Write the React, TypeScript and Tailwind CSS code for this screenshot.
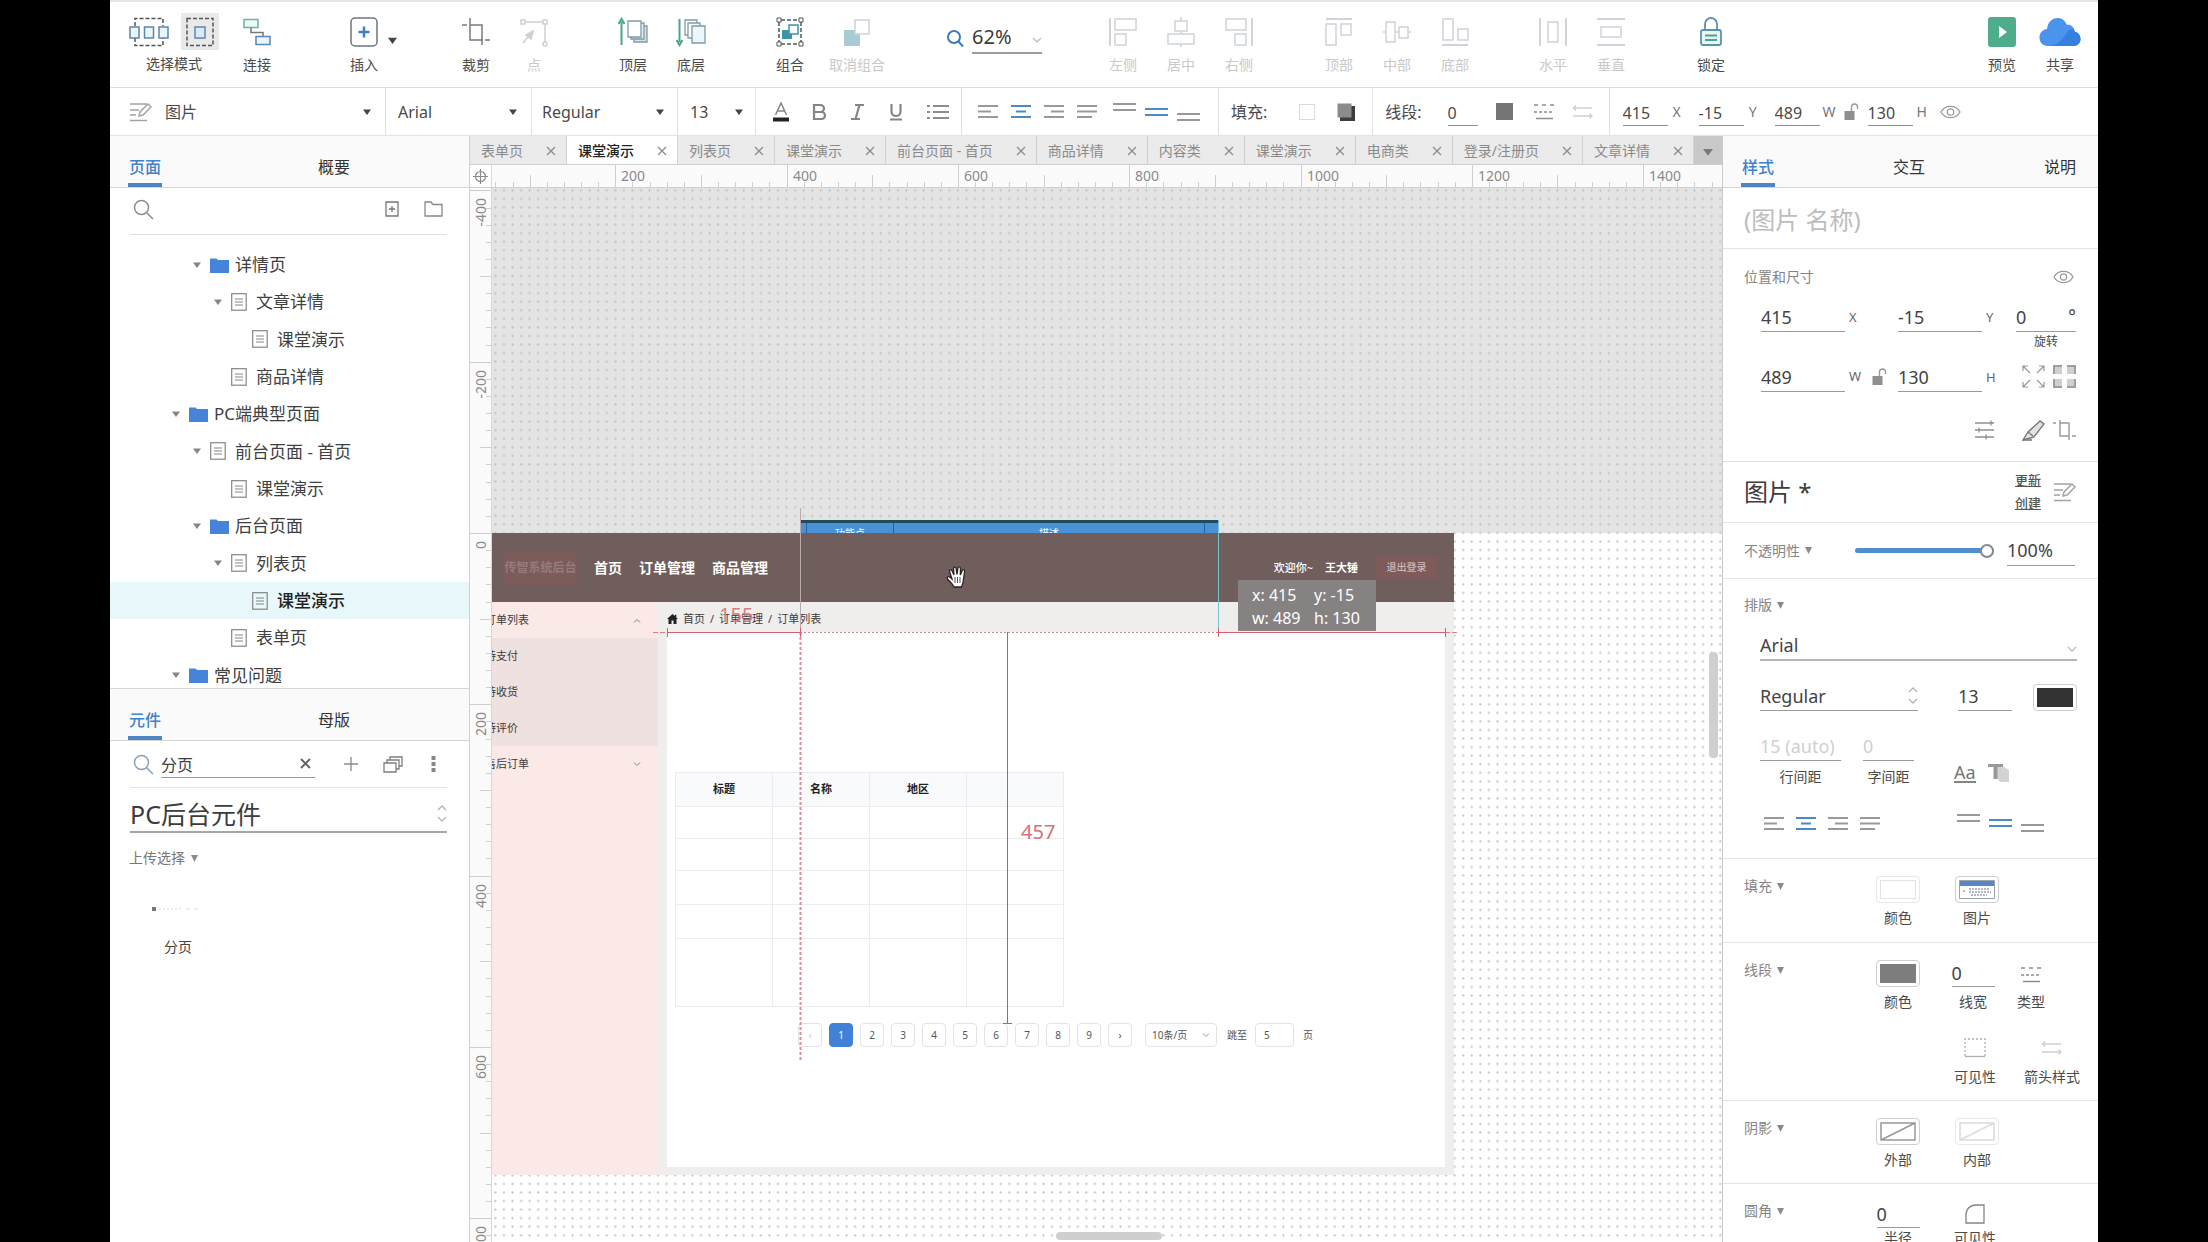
import React from "react";
import type { ReactNode } from "react";

/* ---------- geometry of the design canvas ---------- */
const SCALE = 0.8565; // screen pixels per canvas unit at 62 % zoom
const ORIGIN_X = -48; // canvas zero, measured from the viewport's corner
const ORIGIN_Y = 345;

/* ---------- icon helpers ---------- */
function Icon({ w, h, children, stroke = "#6b7a86", sw = 1.5 }: { w: number; h: number; children: ReactNode; stroke?: string; sw?: number }) {
  return (
    <svg width={w} height={h} viewBox={`0 0 ${w} ${h}`} fill="none" stroke={stroke} strokeWidth={sw} aria-hidden="true" className="block shrink-0">
      {children}
    </svg>
  );
}

const Caret = ({ size = 8, color = "#444" }: { size?: number; color?: string }) => (
  <svg width={size} height={size - 2} viewBox="0 0 8 6" aria-hidden="true" className="block shrink-0">
    <path d="M0 0.5h8L4 6z" fill={color} />
  </svg>
);

const SmallDown = () => (
  <svg width="7" height="7" viewBox="0 0 7 7" aria-hidden="true" className="block shrink-0">
    <path d="M0 0h7L3.5 7z" fill="#8a8a8a" />
  </svg>
);

const ChevronDown = ({ color = "#bdbdbd" }: { color?: string }) => (
  <Icon w={10} h={6} stroke={color} sw={1.3}><path d="M1 1l4 4 4-4" /></Icon>
);

const UpDown = () => (
  <Icon w={10} h={17} stroke="#b5b5b5" sw={1.3}><path d="M1 5l4-4 4 4M1 12l4 4 4-4" /></Icon>
);

const SearchIcon = ({ color = "#8c8c8c" }: { color?: string }) => (
  <Icon w={21} h={21} stroke={color} sw={1.5}><circle cx="8.500" cy="8.500" r="7" /><path d="M13.500 13.500L20 20" /></Icon>
);

const StyleIcon = () => (
  <Icon w={22} h={20} stroke="#a3a3a3" sw={1.5}>
    <path d="M0 2h17M0 8h9M0 13h6M0 18.500h17" />
    <path d="M9 14l1-4 8-8 3 3-8 8z" fill="#fff" />
  </Icon>
);

const Eye = () => (
  <Icon w={21} h={14} stroke="#999" sw={1.2}><path d="M1 7C5-.5 16-.5 20 7 16 14.500 5 14.500 1 7z" /><circle cx="10.500" cy="7" r="3.200" /></Icon>
);

const Unlock = () => (
  <Icon w={15} h={18} stroke="#9a9a9a" sw={1.4}><rect x="0.500" y="8" width="10" height="9" fill="#8f8f8f" stroke="none" /><path d="M7.500 8V4a3 3 0 0 1 6 0v2" /></Icon>
);

const DashIcon = () => (
  <Icon w={22} h={17} stroke="#8d8d8d" sw={1.5}><path d="M1 2h20" strokeDasharray="4 4" /><path d="M1 9h20" strokeDasharray="3 2" /><path d="M3 15.500h17" /></Icon>
);

const ArrowsIcon = () => (
  <Icon w={20} h={14} stroke="#cfcfcf" sw={1.4}><path d="M0 3h19M3 0.500L0.500 3 3 5.500M0 11h19M16.500 8.500L19 11l-2.500 2.500" /></Icon>
);

const CropIcon = ({ color = "#999" }: { color?: string }) => (
  <Icon w={24} h={22} stroke={color} sw={1.4}><path d="M0 4h3M7 1v16h9M7 4h9v14M19 17h4M16 17v4" /></Icon>
);

type Align = "left" | "center" | "right" | "justify";
function AlignIcon({ kind }: { kind: Align }) {
  const on = kind === "center";
  const d = {
    left: "M0 2h20M0 7.500h13M0 13h20",
    center: "M0 2h20M5 7.500h10M0 13h20",
    right: "M0 2h20M7 7.500h13M0 13h20",
    justify: "M0 2h20M0 7.500h20M0 13h15",
  }[kind];
  return <Icon w={20} h={15} stroke={on ? "#4a8ac9" : "#999"} sw={2}><path d={d} /></Icon>;
}

function VAlignIcon({ kind }: { kind: "top" | "middle" | "bottom" }) {
  const y = { top: 2, middle: 7, bottom: 12 }[kind];
  return (
    <Icon w={23} h={20} stroke={kind === "middle" ? "#4a8ac9" : "#999"} sw={2}>
      <path d={`M0 ${y}h23M0 ${y + 6}h23`} />
    </Icon>
  );
}

const Folder = () => (
  <svg width="19" height="16" viewBox="0 0 19 16" aria-hidden="true" className="block"><path d="M0 1.500h6.500L8 3h11v13H0z" fill="#4684da" /></svg>
);
const Doc = () => (
  <Icon w={16} h={18} stroke="#858585" sw={1.2}><rect x="0.700" y="0.700" width="14.500" height="16.500" /><path d="M4 6h8M4 9h8M4 12h8" /></Icon>
);

/* ---------- main toolbar ---------- */
function Tool({ label, icon, muted, className = "" }: { label: string; icon: ReactNode; muted?: boolean; className?: string }) {
  return (
    <button type="button" disabled={muted} className={`flex w-[58px] shrink-0 flex-col items-center gap-[7px] whitespace-nowrap text-sm ${muted ? "text-[#c9c9c9]" : "text-[#4a4a4a]"} ${className}`}>
      <span className="flex h-8 items-center">{icon}</span>
      <span className="leading-5">{label}</span>
    </button>
  );
}

const MUTE = "#d0d4d8";
const BLUE = "#5b86ad";

const alignTools: { label: string; icon: ReactNode; gap?: string }[] = [
  { label: "左侧", gap: "ml-[52px]", icon: <Icon w={28} h={30} stroke={MUTE}><path d="M1 1v28" strokeWidth="2" /><path d="M6 2h21v11H6zM6 17h11v11H6z" /></Icon> },
  { label: "居中", icon: <Icon w={28} h={30} stroke={MUTE}><path d="M14 0v4M14 14v3M14 27v3" /><path d="M8 4h12v10H8zM1 17h26v10H1z" /></Icon> },
  { label: "右侧", icon: <Icon w={28} h={30} stroke={MUTE}><path d="M27 1v28" strokeWidth="2" /><path d="M1 2h20v11H1zM10 17h11v11H10z" /></Icon> },
  { label: "顶部", gap: "ml-[42px]", icon: <Icon w={28} h={30} stroke={MUTE}><path d="M1 2h26" strokeWidth="2" /><path d="M1 7h10v21H1zM16 7h10v11H16z" /></Icon> },
  { label: "中部", icon: <Icon w={28} h={30} stroke={MUTE}><path d="M0 15h3M12 15h4M25 15h3" /><path d="M3 5h9v20H3zM16 10h9v11h-9z" /></Icon> },
  { label: "底部", icon: <Icon w={28} h={30} stroke={MUTE}><path d="M1 28h26" strokeWidth="2" /><path d="M2 2h10v21H2zM17 12h10v11H17z" /></Icon> },
  { label: "水平", gap: "ml-10", icon: <Icon w={30} h={30} stroke={MUTE}><path d="M2 1v28M28 1v28" strokeWidth="2" /><path d="M10 5h10v20H10z" /></Icon> },
  { label: "垂直", icon: <Icon w={28} h={30} stroke={MUTE}><path d="M0 2h28M0 28h28" strokeWidth="2" /><path d="M4 10h20v10H4z" /></Icon> },
];

function MainToolbar() {
  return (
    <header className="flex h-[88px] shrink-0 items-start border-t-2 border-b border-t-[#e6e6e6] border-b-[#dedede] pt-2 pl-[18px] pr-[9px]">
      <div className="flex w-[92px] shrink-0 flex-col items-center gap-1 text-sm text-[#4a4a4a]" role="group" aria-label="选择模式">
        <div className="flex gap-3 pt-[3px]">
          <button type="button" aria-label="相交选中" className="flex h-[37px] items-center">
            <Icon w={40} h={30} stroke={BLUE}>
              <path d="M6 9V1.500h28V9M6 21v7.500h28V21" stroke="#555" strokeDasharray="4 2" />
              <path d="M1 10h9v11H1zM15.500 10h9v11h-9zM30 10h9v11h-9z" fill="#eaf6fb" />
            </Icon>
          </button>
          <button type="button" aria-label="包含选中" className="flex h-[37px] w-[38px] items-center justify-center bg-[#e9e9ea]">
            <Icon w={28} h={30} stroke={BLUE}>
              <rect x="1" y="1.500" width="26" height="27" stroke="#555" strokeDasharray="4 2" />
              <rect x="9" y="10" width="10" height="11" fill="#dce9f7" />
            </Icon>
          </button>
        </div>
        <span className="leading-5">选择模式</span>
      </div>
      <Tool className="ml-2 pt-1.5" label="连接" icon={<Icon w={28} h={28} stroke={BLUE}><path d="M1 1.500h14v8H1z" stroke="#6bb3a0" fill="#eefaf6" /><path d="M8 9.500v5h12v4" stroke="#777" /><path d="M13 18.500h14v8H13z" fill="#eaf6fb" /></Icon>} />
      <div className="ml-[49px] flex pt-1.5">
        <Tool label="插入" icon={<Icon w={28} h={30} stroke="#6c7680"><rect x="1" y="1" width="26" height="28" rx="4" /><path d="M14 9.500v11M8.500 15h11" stroke="#3f7fc4" strokeWidth="2.500" /></Icon>} />
        <button type="button" aria-label="插入选项" className="-ml-[5px] flex h-11 items-center pt-1"><Caret size={9} /></button>
      </div>
      <Tool className="ml-[50px] pt-1.5" label="裁剪" icon={<Icon w={28} h={30} stroke="#7b7b7b"><path d="M0 8h5M8 1v22h13M8 8h12v20M23 23h5" /></Icon>} />
      <Tool className="pt-1.5" muted label="点" icon={<Icon w={28} h={30} stroke="#cfcfcf"><path d="M5 5h18M25 7v18" /><path d="M1 3h4v4H1zM23 3h4v4h-4z" /><circle cx="25" cy="27" r="2" /><path d="M3 26l8-10" /><path d="M13 14l-2 8-5-4z" fill="#cfcfcf" /></Icon>} />
      <Tool className="ml-[41px] pt-1.5" label="顶层" icon={<Icon w={30} h={30} stroke="#7f9ba6" sw={1.3}><path d="M3.500 28V5M0.500 7l3-5 3 5" stroke="#4aa58a" strokeWidth="2" /><path d="M16 9h13v16H16z" fill="#d7e3e4" /><path d="M13 6h13v16H13z" fill="#e4eeee" /><path d="M10 4h13v16H10z" fill="#fff" /></Icon>} />
      <Tool className="pt-1.5" label="底层" icon={<Icon w={30} h={30} stroke="#7f9ba6" sw={1.3}><path d="M3.500 2v23M0.500 23l3 5 3-5" stroke="#4aa58a" strokeWidth="2" /><path d="M9 3h12v15H9z" fill="#fff" /><path d="M12 6h12v15H12z" fill="#fff" /><path d="M16 9h13v17H16z" fill="#eaf6fb" /></Icon>} />
      <Tool className="ml-[41px] pt-1.5" label="组合" icon={<Icon w={28} h={30} stroke="#555"><path d="M5 3h18M5 27h18M3 5v20M25 5v20" strokeDasharray="4 2" /><path d="M1 1h4v4H1zM23 1h4v4h-4zM1 25h4v4H1zM23 25h4v4h-4z" fill="#fff" strokeWidth="1" /><path d="M6 13h10v9H6z" fill="#3c94a8" stroke="none" /><path d="M13 8h9v9h-9z" fill="#fff" stroke="#3c94a8" /></Icon>} />
      <Tool className="ml-[9px] pt-1.5" muted label="取消组合" icon={<Icon w={28} h={30} stroke={MUTE}><path d="M1 13h16v16H1z" fill="#a9cbd6" stroke="none" /><path d="M12 3h14v14H12z" fill="#fff" /></Icon>} />
      <div className="ml-[60px] flex items-center gap-2 pt-3">
        <Icon w={18} h={18} stroke="#3f78bd" sw={2}><circle cx="8" cy="8" r="6" /><path d="M12.500 12.500L17 17.500" /></Icon>
        <div className="grid w-[70px] items-center border-b-2 border-[#9c9c9c]">
          <select aria-label="缩放" defaultValue="62%" className="col-start-1 row-start-1 h-[30px] w-full appearance-none text-xl text-[#3c3c3c]"><option>62%</option></select>
          <span className="pointer-events-none col-start-1 row-start-1 justify-self-end pt-1.5"><ChevronDown /></span>
        </div>
      </div>
      {alignTools.map((t) => <Tool key={t.label} muted label={t.label} icon={t.icon} className={`pt-1.5 ${t.gap ?? ""}`} />)}
      <Tool className="ml-[42px] pt-1.5" label="锁定" icon={<Icon w={24} h={30} stroke="#5b93ab" sw={1.8}><path d="M6 13V7a6 6 0 0 1 12 0v6" /><rect x="2" y="13" width="20" height="15" rx="2" fill="#eaf8f5" /><path d="M6 18.500h12M6 23h12" stroke="#4aa58a" /></Icon>} />
      <Tool className="ml-auto pt-1.5" label="预览" icon={<Icon w={28} h={30} stroke="none"><rect width="28" height="30" rx="3" fill="#4eae8b" /><path d="M11 9l8 6-8 6z" fill="#fff" /></Icon>} />
      <Tool className="pt-1.5" label="共享" icon={<Icon w={42} h={30} stroke="none"><path d="M9 29C3.500 29 .500 25 .500 20.500c0-4.500 3-8 7.500-8.500C9 5 13 1 18.500 1 23 1 26 3.500 27.500 7.500c5 0 8 3 8.500 7.500 3.500.500 5.500 3.500 5.500 7 0 4-3 7-7 7z" fill="#4a93ee" /><path d="M9 29c8 0 14-5 20-15 3-2 5-2 7 1 3.500.500 5.500 3.500 5.500 7 0 4-3 7-7 7z" fill="#357fe0" /></Icon>} />
    </header>
  );
}

/* ---------- format toolbar ---------- */
function BarSelect({ label, value, className, icon }: { label: string; value: string; className: string; icon?: ReactNode }) {
  return (
    <div className={`flex h-full shrink-0 items-center border-r border-[#e2e2e2] ${className}`}>
      {icon}
      <span className="grid flex-1 items-center">
        <select aria-label={label} defaultValue={value} className="col-start-1 row-start-1 w-full appearance-none text-base text-[#4a4a4a]"><option>{value}</option></select>
        <span className="pointer-events-none col-start-1 row-start-1 justify-self-end"><Caret /></span>
      </span>
    </div>
  );
}

function BarField({ name, value, unit, className = "" }: { name: string; value: string; unit: string; className?: string }) {
  return (
    <label className={`flex shrink-0 items-center gap-[3px] text-sm text-[#777] ${className}`}>
      <input aria-label={name} defaultValue={value} className="mt-[3px] h-[26px] w-[45px] border-b border-[#8f8f8f] text-base text-[#4a4a4a]" />
      <span className="w-3 text-center">{unit}</span>
    </label>
  );
}

function FormatBar() {
  return (
    <div className="flex h-[48px] shrink-0 items-center border-b border-[#e2e2e2]" role="toolbar" aria-label="格式">
      <BarSelect label="元件样式" value="图片" className="w-[276px] pl-5 pr-[14px]" icon={<span className="mr-[13px]"><StyleIcon /></span>} />
      <BarSelect label="字体" value="Arial" className="w-[146px] pl-3 pr-[14px]" />
      <BarSelect label="字形" value="Regular" className="w-[146px] pl-[10px] pr-[13px]" />
      <BarSelect label="字号" value="13" className="w-[78px] pl-3 pr-3" />
      <div className="flex h-full shrink-0 items-center gap-[23px] border-r border-[#e2e2e2] pl-[17px] pr-3">
        <button type="button" aria-label="文字颜色"><Icon w={16} h={20} stroke="#858585" sw={1.5}><path d="M2.500 13L8 1l5.500 12M4.500 9h7" /><path d="M0 17.500h16" stroke="#222" strokeWidth="4" /></Icon></button>
        <button type="button" aria-label="粗体"><Icon w={15} h={18} stroke="#858585" sw={2.2}><path d="M2 2h6.500a3.500 3.500 0 0 1 0 7H2zM2 9h7.500a3.500 3.500 0 0 1 0 7H2z" /></Icon></button>
        <button type="button" aria-label="斜体"><Icon w={15} h={18} stroke="#858585" sw={2.2}><path d="M5 2h9M1 16h9M9.500 2l-4 14" /></Icon></button>
        <button type="button" aria-label="下划线"><Icon w={16} h={18} stroke="#858585" sw={2.2}><path d="M3.500 1v7.500a4.500 4.500 0 0 0 9 0V1M2 16.500h12" /></Icon></button>
        <button type="button" aria-label="列表"><Icon w={22} h={16} stroke="#8d8d8d" sw={2.2}><path d="M0 2h3M6 2h16M0 8h3M6 8h16M0 14h3M6 14h16" /></Icon></button>
      </div>
      <div className="flex h-full shrink-0 items-center border-r border-[#e2e2e2] pl-4 pr-[18px]">
        <div className="flex gap-[13px]">
          {(["left", "center", "right", "justify"] as Align[]).map((k) => <button type="button" key={k} aria-label={`align ${k}`}><AlignIcon kind={k} /></button>)}
        </div>
        <div className="ml-4 flex gap-[9px]">
          {(["top", "middle", "bottom"] as const).map((k) => <button type="button" key={k} aria-label={`align ${k}`}><VAlignIcon kind={k} /></button>)}
        </div>
      </div>
      <div className="flex h-full shrink-0 items-center border-r border-[#e2e2e2] pl-3 pr-[17px] text-base text-[#4a4a4a]">
        填充:
        <button type="button" aria-label="填充颜色" className="ml-8 size-4 border border-[#dadada]" />
        <button type="button" aria-label="阴影" className="ml-[22px]"><Icon w={18} h={18} stroke="none"><path d="M3 3h15v15H3z" fill="#3d3d3d" /><path d="M0.500 0.500h14v14h-14z" fill="#8b8b8b" /></Icon></button>
      </div>
      <div className="flex h-full shrink-0 items-center border-r border-[#e2e2e2] pl-3 pr-4 text-base text-[#4a4a4a]">
        线段:
        <input aria-label="线宽" defaultValue="0" className="ml-[26px] mt-[3px] h-[26px] w-[30px] border-b border-[#8f8f8f]" />
        <button type="button" aria-label="线段颜色" className="ml-[18px] size-[17px] bg-[#757575]" />
        <button type="button" aria-label="线段类型" className="ml-5"><DashIcon /></button>
        <button type="button" aria-label="箭头样式" className="ml-[18px]"><ArrowsIcon /></button>
      </div>
      <BarField name="X" value="415" unit="X" className="ml-[13px]" />
      <BarField name="Y" value="-15" unit="Y" className="ml-4" />
      <BarField name="宽" value="489" unit="W" className="ml-4" />
      <button type="button" aria-label="锁定比例" className="mx-[9px]"><Unlock /></button>
      <BarField name="高" value="130" unit="H" />
      <button type="button" aria-label="显示" className="ml-3"><Eye /></button>
    </div>
  );
}

/* ---------- left column ---------- */
function PanelTabs({ tabs, className = "" }: { tabs: string[]; className?: string }) {
  return (
    <div role="tablist" className={`flex h-[52px] shrink-0 items-end border-b border-[#d5d5d5] bg-[#fafafa] text-base ${className}`}>
      {tabs.map((t, i) => (
        <button key={t} type="button" role="tab" aria-selected={i === 0} className={`h-10 border-b-4 px-px pt-1 ${i === 0 ? "border-[#4f83c3] font-medium text-[#3f82cc]" : "border-transparent text-[#333]"}`}>{t}</button>
      ))}
    </div>
  );
}

type Node = { name: string; level: number; folder?: boolean; leaf?: boolean; active?: boolean };
const tree: Node[] = [
  { name: "详情页", level: 3, folder: true },
  { name: "文章详情", level: 4 },
  { name: "课堂演示", level: 5, leaf: true },
  { name: "商品详情", level: 4, leaf: true },
  { name: "PC端典型页面", level: 2, folder: true },
  { name: "前台页面 - 首页", level: 3 },
  { name: "课堂演示", level: 4, leaf: true },
  { name: "后台页面", level: 3, folder: true },
  { name: "列表页", level: 4 },
  { name: "课堂演示", level: 5, leaf: true, active: true },
  { name: "表单页", level: 4, leaf: true },
  { name: "常见问题", level: 2, folder: true },
];
const indent: Record<number, string> = { 2: "pl-[62px]", 3: "pl-[83px]", 4: "pl-[104px]", 5: "pl-[125px]" };

function LeftColumn() {
  return (
    <aside className="flex w-[360px] shrink-0 flex-col border-r border-[#d0d0d0]">
      <section className="flex h-1/2 shrink-0 flex-col overflow-hidden border-b border-[#d5d5d5]">
        <PanelTabs tabs={["页面", "概要"]} className="gap-[155px] pl-[18px]" />
        <div className="ml-5 mr-[22px] flex h-[47px] shrink-0 items-center border-b border-[#dedede] pl-[3px] pb-1">
          <button type="button" aria-label="搜索页面"><SearchIcon /></button>
          <button type="button" aria-label="新增页面" className="ml-auto"><Icon w={14} h={16} stroke="#777" sw={1.3}><path d="M1 1h12v14H1zM7 5v6M4 8h6" /></Icon></button>
          <button type="button" aria-label="新增文件夹" className="ml-[25px] mr-1"><Icon w={19} h={16} stroke="#888" sw={1.3}><path d="M1 15V1h6l2 2.500h9V15z" /></Icon></button>
        </div>
        <ul className="mt-[11px] grid h-[448px] shrink-0 auto-rows-fr text-[17px] text-[#404040]">
          {tree.map((n, i) => (
            <li key={i} className={n.active ? "bg-[#e8f7fa]" : ""}>
              <button type="button" className={`flex h-full w-full items-center ${indent[n.level]} ${n.active ? "font-medium text-[#222]" : ""}`}>
                <span className="w-[17px]">{!n.leaf && <Caret color="#858585" />}</span>
                <span className="w-[25px]">{n.folder ? <Folder /> : <Doc />}</span>
                {n.name}
              </button>
            </li>
          ))}
        </ul>
      </section>
      <section className="flex flex-col">
        <PanelTabs tabs={["元件", "母版"]} className="gap-[155px] pl-[18px]" />
        <div className="ml-5 mr-[22px] flex h-[47px] items-center border-b border-[#e4e4e4] pl-[3px]">
          <SearchIcon color="#8aa0bb" />
          <span className="ml-[7px] flex w-[154px] items-center border-b border-[#9a9a9a]">
            <input aria-label="搜索元件" defaultValue="分页" className="h-[27px] w-full min-w-0 text-base text-[#404040]" />
            <button type="button" aria-label="清除" className="mr-1 shrink-0"><Icon w={11} h={11} stroke="#666" sw={2}><path d="M1 1l9 9M10 1l-9 9" /></Icon></button>
          </span>
          <button type="button" aria-label="添加" className="ml-[29px]"><Icon w={14} h={14} stroke="#8a8a8a" sw={1.3}><path d="M7 0v14M0 7h14" /></Icon></button>
          <button type="button" aria-label="元件库" className="ml-[25px]"><Icon w={20} h={17} stroke="#7e7e7e" sw={1.3}><path d="M1 7h12v9H1zM4 7V4h12v9h-3M7 4V1h12v9h-3" /></Icon></button>
          <button type="button" aria-label="更多" className="ml-7"><Icon w={5} h={16} stroke="none"><path d="M0.500 0h4v4h-4zM0.500 6h4v4h-4zM0.500 12h4v4h-4z" fill="#888" /></Icon></button>
        </div>
        <div className="ml-5 mr-[22px] mt-1 grid items-center border-b-2 border-[#a6a6a6]">
          <select aria-label="元件库" defaultValue="PC后台元件" className="col-start-1 row-start-1 h-[39px] w-full appearance-none pt-1 text-[25px] text-[#3c3c3c]"><option>PC后台元件</option></select>
          <span className="pointer-events-none col-start-1 row-start-1 justify-self-end pt-1"><UpDown /></span>
        </div>
        <button type="button" className="ml-[19px] mt-[14px] flex h-[22px] items-center gap-1.5 text-sm text-[#777]">上传选择 <SmallDown /></button>
        <button type="button" className="ml-[37px] mt-9 flex w-[62px] flex-col items-center gap-6 text-sm text-[#444]">
          <Icon w={52} h={8} stroke="#d8d8d8" sw={1}><path d="M0 2h4v4H0z" fill="#777" stroke="none" /><path d="M7 4h24" strokeDasharray="2 2" /><path d="M34 4h16" strokeDasharray="4 4" /></Icon>
          分页
        </button>
      </section>
    </aside>
  );
}

/* ---------- canvas column ---------- */
const tabs = ["表单页", "课堂演示", "列表页", "课堂演示", "前台页面 - 首页", "商品详情", "内容类", "课堂演示", "电商类", "登录/注册页", "文章详情"];

function DocTabs() {
  return (
    <div className="flex h-[29px] shrink-0 border-b border-[#cfcfcf] bg-[#ebebeb] text-sm text-[#8a8a8a]">
      {tabs.map((t, i) => (
        <div key={i} className={`flex shrink-0 items-center border-r border-[#d2d2d2] pt-0.5 ${i === 1 ? "bg-white font-medium text-[#222]" : ""}`}>
          <button type="button" className="whitespace-nowrap pl-[11px] pr-[23px]">{t}</button>
          <button type="button" aria-label={`关闭 ${t}`} className="mr-[10px]"><Icon w={10} h={10} stroke="#8a8a8a" sw={1.2}><path d="M1 1l8 8M9 1L1 9" /></Icon></button>
        </div>
      ))}
      <button type="button" aria-label="全部标签" className="ml-auto flex w-[31px] items-center justify-center bg-[#c9c9c9] pt-1"><Caret size={10} color="#7a7a7a" /></button>
    </div>
  );
}

const steps = (from: number, to: number) => Array.from({ length: (to - from) / 20 + 1 }, (_, i) => from + i * 20);

function HRuler() {
  return (
    <svg className="h-full min-w-0 flex-1 bg-[#fbfbfb]" aria-hidden="true">
      {steps(60, 1480).map((u) => {
        const x = Math.round(ORIGIN_X + u * SCALE);
        const y = u % 200 === 0 ? 0 : u % 100 === 0 ? 10 : 17;
        return (
          <g key={u}>
            <line x1={x + 0.5} x2={x + 0.5} y1={y} y2={23} stroke="#cfcfcf" />
            {u % 200 === 0 && <text x={x + 6} y={16} fontSize="14" fill="#8a8a8a">{u}</text>}
          </g>
        );
      })}
    </svg>
  );
}

function VRuler() {
  return (
    <svg className="h-full w-[22px] shrink-0 border-r border-[#d8d8d8] bg-[#fbfbfb]" aria-hidden="true">
      {steps(-400, 880).map((u) => {
        const y = Math.round(ORIGIN_Y + u * SCALE);
        const x = u % 200 === 0 ? 0 : u % 100 === 0 ? 10 : 16;
        return (
          <g key={u}>
            <line x1={x} x2={22} y1={y + 0.5} y2={y + 0.5} stroke="#cfcfcf" />
            {u % 200 === 0 && <text transform={`translate(16 ${y + 8}) rotate(-90)`} textAnchor="end" fontSize="14" fill="#8a8a8a">{u}</text>}
          </g>
        );
      })}
    </svg>
  );
}

function Mockup() {
  return (
    <div className="absolute top-[345px] -left-12 flex w-[1010px] flex-col bg-[#efeeec] text-[11px] text-[#3f3a3a]">
      <div className="flex h-[69px] items-center bg-[#6f5e5c] pl-[60px] pr-[17px] text-sm font-bold text-white">
        <span className="flex h-[34px] w-[73px] items-center justify-center whitespace-nowrap bg-[#7c5b5a] text-xs text-[#957d7b]">传智系统后台</span>
        <span className="ml-[17px]">首页</span>
        <span className="ml-[17px]">订单管理</span>
        <span className="ml-[17px]">商品管理</span>
        <span className="ml-auto text-[11px] font-medium">欢迎你~</span>
        <span className="ml-3 text-[11px]">王大锤</span>
        <span className="ml-[18px] flex h-[23px] w-[61px] items-center justify-center bg-[#7c5b5a] text-[10px] font-medium text-[#cdbcba]">退出登录</span>
      </div>
      <div className="flex h-[573px]">
        <div className="w-[214px] bg-[#fae9e7]">
          <div className="flex h-9 items-center justify-between pl-[41px] pr-[17px]">订单列表<Icon w={8} h={5} stroke="#8a8080" sw={1}><path d="M1 4.500l3-3 3 3" /></Icon></div>
          <div className="bg-[#efe1df]">
            {["待支付", "待收货", "待评价"].map((t) => <div key={t} className="flex h-9 items-center pl-[41px]">{t}</div>)}
          </div>
          <div className="flex h-9 items-center justify-between pl-[41px] pr-[17px]">售后订单<Icon w={8} h={5} stroke="#8a8080" sw={1}><path d="M1 0.500l3 3 3-3" /></Icon></div>
        </div>
        <div className="flex flex-1 flex-col pb-2 pl-[9px] pr-[9px]">
          <div className="flex h-[30px] items-center gap-[5px] pt-1">
            <svg width="11" height="10" viewBox="0 0 11 10" aria-hidden="true"><path d="M5.500 0L0 5h1.500v5h3V6.500h2V10h3V5H11L9.300 3.400V.8H7.800V2z" fill="#222" /></svg>
            <span>首页</span><span>/</span><span>订单管理</span><span>/</span><span>订单列表</span>
          </div>
          <div className="flex flex-1 flex-col bg-white">
            <table className="ml-2 mt-[140px] w-[389px] table-fixed border-collapse">
              <thead>
                <tr className="h-[34px] bg-[#f9fafc]">
                  {["标题", "名称", "地区", ""].map((h, i) => <th key={i} className="border border-[#ececf0] text-center font-bold text-[#222]">{h}</th>)}
                </tr>
              </thead>
              <tbody>
                {["h-8", "h-8", "h-[34px]", "h-[34px]", "h-[68px]"].map((h, r) => (
                  <tr key={r} className={h}>{[0, 1, 2, 3].map((c) => <td key={c} className="border border-[#ececf0]" />)}</tr>
                ))}
              </tbody>
            </table>
            <nav aria-label="分页" className="ml-[131px] mt-4 flex items-center text-[10px] text-[#555]">
              <div className="flex gap-[7px]">
                {["‹", "1", "2", "3", "4", "5", "6", "7", "8", "9", "›"].map((p) => (
                  <button key={p} type="button" className={`h-6 w-6 rounded-sm border ${p === "1" ? "border-[#3f82d8] bg-[#3f82d8] text-white" : p === "‹" ? "border-[#e3e3e3] text-[#ccc]" : "border-[#e3e3e3]"}`}>{p}</button>
                ))}
              </div>
              <span className="ml-[13px] grid w-[72px] items-center rounded-sm border border-[#e3e3e3]">
                <select aria-label="每页条数" defaultValue="10条/页" className="col-start-1 row-start-1 h-[22px] appearance-none pl-1.5"><option>10条/页</option></select>
                <span className="pointer-events-none col-start-1 row-start-1 mr-1.5 justify-self-end"><Icon w={8} h={5} stroke="#999" sw={1}><path d="M1 0.500l3 3 3-3" /></Icon></span>
              </span>
              <label className="ml-[10px] flex items-center gap-2">跳至<input defaultValue="5" className="h-6 w-[39px] rounded-sm border border-[#e3e3e3] pl-2" /></label>
              <span className="ml-[9px]">页</span>
            </nav>
          </div>
        </div>
      </div>
    </div>
  );
}

function Viewport() {
  const grid = 10 * SCALE;
  return (
    <div className="relative min-w-0 flex-1 overflow-hidden bg-white">
      <div className="h-[345px] bg-[#e4e4e4]" />
      <svg className="absolute inset-0 h-full w-full" aria-hidden="true">
        <defs>
          <pattern id="dots" x={ORIGIN_X - grid / 2} y={ORIGIN_Y - grid / 2} width={grid} height={grid} patternUnits="userSpaceOnUse">
            <circle cx={grid / 2} cy={grid / 2} r="1.1" fill="#c0c0c0" />
          </pattern>
        </defs>
        <rect width="100%" height="100%" fill="url(#dots)" />
      </svg>

      <div className="absolute top-[332px] left-[308px] flex h-[111px] w-[418px] items-start border-t-[3px] border-[#1f4b5c] bg-[#4a92d8] px-1.5 text-[10px] leading-5 text-white">
        <span className="w-[88px] border-x border-[#2c5f93] text-center">功能点</span>
        <span className="flex-1 text-center">描述</span>
        <span className="w-2 border-l border-[#2c5f93]">&nbsp;</span>
      </div>

      <Mockup />

      <svg className="absolute inset-0 h-full w-full" fill="none" aria-hidden="true">
        <path d="M308.500 320v124" stroke="#b9aaa9" />
        <path d="M726.500 332v112" stroke="#74c4cf" />
        <path d="M308.500 444v428" stroke="#dc8f9b" strokeWidth="2" strokeDasharray="3 2" />
        <path d="M308 444.500h418" stroke="#b98c8e" strokeDasharray="2 2" />
        <path d="M161 444.500h14M953 444.500h14" stroke="#d97c88" strokeDasharray="5 2" />
        <path d="M175 444.500h133M726 444.500h227" stroke="#d0606e" />
        <path d="M175.500 440v9M308.500 440v9M726.500 440v9M953.500 440v9" stroke="#d0606e" />
        <path d="M515.500 444v391M511 835.500h9" stroke="#b85f6a" />
      </svg>
      <span className="absolute top-[413px] left-[227px] text-xl text-[#dc7b87]">155</span>
      <span className="absolute top-[630px] left-[529px] text-xl text-[#d8707d]">457</span>

      <div className="absolute top-[392px] left-[746px] grid w-[138px] grid-cols-[62px_auto] bg-[#868282] pt-1 pb-px pl-[14px] text-base leading-[23px] text-white">
        <span>x: 415</span><span>y: -15</span>
        <span>w: 489</span><span>h: 130</span>
      </div>

      <svg className="absolute top-[377px] left-[453px]" width="24" height="24" viewBox="0 0 24 24" aria-hidden="true">
        <path d="M9 22c-1-3-4-5-6.500-8-1-1.600.8-3 2.200-2L7 14 4.500 6.500c-.4-1.800 1.800-2.300 2.500-.8L9 10 8.500 3.500c0-1.800 2.300-1.900 2.600-.2L12 9.500l1-6.500c.3-1.700 2.500-1.400 2.500.4L15.300 10l2-4.500c.8-1.500 2.700-.8 2.300.8L18.500 14c-.2 3.500-.8 5.500-2 8z" fill="#fff" stroke="#2b2222" strokeWidth="1.300" />
        <path d="M10 12v6M12.500 12v6M15 12v6" stroke="#2b2222" strokeWidth="0.800" />
      </svg>

      <div className="absolute top-[464px] right-1 h-[106px] w-[9px] rounded-sm bg-[#cfcfcf]" />
      <div className="absolute bottom-[2px] left-[564px] h-2 w-[106px] rounded-sm bg-[#cfcfcf]" />
    </div>
  );
}

function CanvasColumn() {
  return (
    <main className="flex min-w-0 flex-1 flex-col">
      <DocTabs />
      <div className="flex h-[23px] shrink-0 border-b border-[#cfcfcf]">
        <div className="flex w-[22px] shrink-0 items-center justify-center border-r border-[#d8d8d8]">
          <Icon w={15} h={15} stroke="#8a8a8a" sw={1.2}><circle cx="7.500" cy="7.500" r="5" /><path d="M7.500 0v15M0 7.500h15" /></Icon>
        </div>
        <HRuler />
      </div>
      <div className="flex min-h-0 flex-1">
        <VRuler />
        <Viewport />
      </div>
    </main>
  );
}

/* ---------- inspector ---------- */
function Field({ name, value, className = "", faint }: { name: string; value: string; className?: string; faint?: boolean }) {
  return <input aria-label={name} defaultValue={value} className={`block h-[30px] border-b border-[#9a9a9a] text-lg ${faint ? "text-[#cfcfcf]" : "text-[#444]"} ${className}`} />;
}

function SectionLabel({ children }: { children: ReactNode }) {
  return <button type="button" className="flex h-5 w-[125px] shrink-0 items-center gap-[5px] text-sm text-[#858585]">{children}<SmallDown /></button>;
}

function Swatch({ label, children, faint }: { label: string; children: ReactNode; faint?: boolean }) {
  return (
    <button type="button" className="flex w-[58px] flex-col items-center gap-[5px] text-sm leading-5 text-[#4a4a4a]">
      <span className={`flex h-[27px] w-11 items-center justify-center rounded-sm border ${faint ? "border-[#e8e8e8]" : "border-[#cfcfcf]"}`}>{children}</span>
      {label}
    </button>
  );
}

function IconItem({ label, icon, className }: { label: string; icon: ReactNode; className: string }) {
  return (
    <button type="button" className={`flex flex-col items-center whitespace-nowrap text-sm leading-5 text-[#4a4a4a] ${className}`}>{icon}{label}</button>
  );
}

const Shadow = ({ color }: { color: string }) => <Icon w={36} h={19} stroke={color} sw={1.5}><path d="M1 1h34v17H1zM1 18L35 1" /></Icon>;

function Inspector() {
  return (
    <aside className="flex w-[376px] shrink-0 flex-col overflow-hidden border-l border-[#c9c9c9]">
      <PanelTabs tabs={["样式", "交互", "说明"]} className="justify-between pl-[18px] pr-[21px]" />
      <div className="flex h-[61px] shrink-0 items-center border-b border-[#e4e4e4] pl-[21px]">
        <input aria-label="名称" placeholder="(图片 名称)" className="mt-1 w-full text-2xl placeholder:text-[#bdbdbd]" />
      </div>

      <section className="shrink-0 border-b border-[#dcdcdc] pt-[18px] pb-[21px] pl-[21px] pr-[21px]">
        <div className="flex h-5 items-center justify-between pr-[3px] text-sm text-[#858585]">位置和尺寸<button type="button" aria-label="显示"><Eye /></button></div>
        <div className="mt-[15px] grid grid-cols-[84px_53px_84px_34px_60px] items-start gap-y-[10px] pl-[17px] text-[13px] text-[#666]">
          <Field name="X" value="415" className="w-full" /><span className="pt-[6px] pl-1">X</span>
          <Field name="Y" value="-15" className="w-full" /><span className="pt-[6px] pl-1">Y</span>
          <label className="flex flex-col items-center">
            <span className="flex w-full justify-between border-b border-[#9a9a9a] text-lg text-[#444]"><input defaultValue="0" className="h-[29px] w-10" />°</span>
            <span className="text-xs leading-5 text-[#4a4a4a]">旋转</span>
          </label>
          <Field name="宽" value="489" className="w-full" /><span className="flex items-center gap-[11px] pt-[5px] pl-1">W<button type="button" aria-label="锁定比例"><Unlock /></button></span>
          <Field name="高" value="130" className="w-full" /><span className="pt-[6px] pl-1">H</span>
          <div className="flex gap-2 pt-[3px] pl-[6px]">
            <button type="button" aria-label="适合内容"><Icon w={23} h={23} stroke="#999" sw={1.2}><path d="M8 8L1 1M1 6V1h5M15 8l7-7M22 6V1h-5M8 15l-7 7M1 17v5h5M15 15l7 7M22 17v5h-5" /></Icon></button>
            <button type="button" aria-label="适合图片"><Icon w={23} h={23} stroke="none"><path d="M0 0h9v9H0zM14 0h9v9h-9zM0 14h9v9H0zM14 14h9v9h-9z" fill="#d0d0d0" /><path d="M1 9V1h8M14 1h8v8M1 14v8h8M14 22h8v-8" stroke="#8f8f8f" strokeWidth="1.500" /></Icon></button>
          </div>
        </div>
        <div className="mt-7 flex h-5 items-center justify-end">
          <button type="button" aria-label="调整" className="mr-[27px]"><Icon w={20} h={20} stroke="#8f8f8f" sw={1.3}><path d="M0 3h19M16 0.500v5M0 10h19M4 7.500v5M0 17h19M11 14.500v5" /></Icon></button>
          <button type="button" aria-label="切片" className="mr-2"><Icon w={23} h={21} stroke="#777" sw={1.4}><path d="M1 20l5-8 12-11 4 3-10 13z" fill="#e2e2e2" /><path d="M6 12l5 4M1 20h9" /></Icon></button>
          <button type="button" aria-label="裁剪"><CropIcon /></button>
        </div>
      </section>

      <section className="flex h-[61px] shrink-0 items-center border-b border-[#e6e6e6] pl-[21px] pr-[22px]">
        <h2 className="text-2xl text-[#3c3c3c]">图片 *</h2>
        <div className="ml-auto mr-[13px] flex flex-col text-[13px] font-medium leading-[23px] text-[#555]">
          <a href="#update" className="underline">更新</a>
          <a href="#create" className="underline">创建</a>
        </div>
        <button type="button" aria-label="样式管理"><StyleIcon /></button>
      </section>

      <section className="flex h-14 shrink-0 items-center border-b border-[#e6e6e6] pl-[21px] pr-[23px]">
        <button type="button" className="flex items-center gap-[5px] text-sm text-[#858585]">不透明性<SmallDown /></button>
        <input type="range" aria-label="不透明性" defaultValue={100} className="ml-auto h-[5px] w-[139px] appearance-none rounded-full bg-[#4f8fd0] [&::-webkit-slider-thumb]:size-[14px] [&::-webkit-slider-thumb]:appearance-none [&::-webkit-slider-thumb]:rounded-full [&::-webkit-slider-thumb]:border-2 [&::-webkit-slider-thumb]:border-[#7f8a96] [&::-webkit-slider-thumb]:bg-white" />
        <Field name="不透明性数值" value="100%" className="ml-[13px] w-[68px]" />
      </section>

      <section className="shrink-0 border-b border-[#e4e4e4] pt-4 pb-[25px] pl-[21px] pr-[21px]">
        <SectionLabel>排版</SectionLabel>
        <div className="pl-4">
          <div className="mt-4 grid items-center border-b-2 border-[#b5b5b5]">
            <select aria-label="字体" defaultValue="Arial" className="col-start-1 row-start-1 h-7 w-full appearance-none text-lg text-[#444]"><option>Arial</option></select>
            <span className="pointer-events-none col-start-1 row-start-1 justify-self-end pt-2"><ChevronDown /></span>
          </div>
          <div className="mt-5 flex items-start">
            <div className="grid w-[158px] items-center border-b border-[#9a9a9a]">
              <select aria-label="字形" defaultValue="Regular" className="col-start-1 row-start-1 h-[29px] w-full appearance-none text-lg text-[#444]"><option>Regular</option></select>
              <span className="pointer-events-none col-start-1 row-start-1 justify-self-end"><UpDown /></span>
            </div>
            <Field name="字号" value="13" className="ml-10 w-[54px]" />
            <button type="button" aria-label="文字颜色" className="ml-auto mt-[3px] flex h-[27px] w-11 items-center justify-center rounded-sm border border-[#cfcfcf]"><span className="h-[19px] w-9 bg-[#333]" /></button>
          </div>
          <div className="mt-5 flex items-start text-sm leading-5 text-[#4a4a4a]">
            <label className="flex w-[81px] flex-col items-center gap-1.5"><Field name="行间距" value="15 (auto)" faint className="w-full" />行间距</label>
            <label className="ml-[22px] flex w-[51px] flex-col items-center gap-1.5"><Field name="字间距" value="0" faint className="w-full" />字间距</label>
            <button type="button" aria-label="大小写" className="ml-10 mt-8 border-b-2 border-[#858585] text-lg leading-[18px] text-[#777]">Aa</button>
            <button type="button" aria-label="文字阴影" className="ml-3 mt-8"><Icon w={22} h={20} stroke="none"><path d="M8 4h8l5 3v12h-9l-4-5z" fill="#d3d3d3" /><path d="M0 1h15v3H9.500v12H5.500V4H0z" fill="#999" /></Icon></button>
          </div>
          <div className="mt-[26px] flex h-5 items-center pl-1">
            <div className="flex gap-3">
              {(["left", "center", "right", "justify"] as Align[]).map((k) => <button type="button" key={k} aria-label={`align ${k}`}><AlignIcon kind={k} /></button>)}
            </div>
            <div className="ml-[77px] flex gap-[9px]">
              {(["top", "middle", "bottom"] as const).map((k) => <button type="button" key={k} aria-label={`align ${k}`}><VAlignIcon kind={k} /></button>)}
            </div>
          </div>
        </div>
      </section>

      <section className="flex shrink-0 items-start border-b border-[#e4e4e4] pt-[17px] pb-[14px] pl-[21px]">
        <SectionLabel>填充</SectionLabel>
        <Swatch faint label="颜色"><span className="h-[19px] w-9 border border-[#e3e3e3] bg-white" /></Swatch>
        <div className="ml-[21px]">
          <Swatch label="图片">
            <Icon w={36} h={19} stroke="#9aa3b0" sw={1}><path d="M0.500 0.500h35v18H0.500z" fill="#fff" /><path d="M1 3.500h34" stroke="#5b86c4" strokeWidth="5" /><path d="M4 11h3M10 9h20M10 12h22M12 15h16" strokeDasharray="2 1" strokeWidth="1.500" /></Icon>
          </Swatch>
        </div>
      </section>

      <section className="shrink-0 border-b border-[#e4e4e4] pt-[17px] pb-[13px] pl-[21px]">
        <div className="flex items-start">
          <SectionLabel>线段</SectionLabel>
          <Swatch label="颜色"><span className="h-[19px] w-9 bg-[#7d7d7d]" /></Swatch>
          <label className="ml-[21px] flex w-[58px] flex-col items-center gap-[5px] pr-2 text-sm leading-5 text-[#4a4a4a]">
            <input defaultValue="0" className="h-[27px] w-[43px] border-b border-[#9a9a9a] text-lg text-[#444]" />线宽
          </label>
          <IconItem label="类型" className="w-[50px] gap-[9px] pt-1.5" icon={<DashIcon />} />
        </div>
        <div className="mt-[26px] flex items-start pl-[202px]">
          <IconItem label="可见性" className="w-[58px] gap-[9px]" icon={<Icon w={22} h={20} stroke="#b0b0b0" sw={1.3}><path d="M1 18V1h20v17" strokeDasharray="2 2" /><path d="M1 18.500h20" /></Icon>} />
          <IconItem label="箭头样式" className="ml-4 w-[64px] gap-3 pt-[3px]" icon={<ArrowsIcon />} />
        </div>
      </section>

      <section className="flex shrink-0 items-start border-b border-[#e4e4e4] pt-[17px] pb-[13px] pl-[21px]">
        <SectionLabel>阴影</SectionLabel>
        <Swatch label="外部"><Shadow color="#999" /></Swatch>
        <div className="ml-[21px]"><Swatch faint label="内部"><Shadow color="#dcdcdc" /></Swatch></div>
      </section>

      <section className="flex shrink-0 items-start pt-[17px] pl-[21px]">
        <SectionLabel>圆角</SectionLabel>
        <label className="flex w-[58px] flex-col items-center text-sm leading-5 text-[#4a4a4a]">
          <input defaultValue="0" className="h-[27px] w-[43px] border-b border-[#9a9a9a] text-lg text-[#444]" />半径
        </label>
        <IconItem label="可见性" className="ml-[19px] w-[58px] gap-1 pt-[3px]" icon={<Icon w={20} h={20} stroke="#858585" sw={1.3}><path d="M1 19V11C1 5 5 1 11 1h8v18z" /></Icon>} />
      </section>
    </aside>
  );
}

export default function App() {
  return (
    <div className="h-screen bg-black px-[110px] font-['Noto_Sans','Noto_Sans_CJK_SC',sans-serif]">
      <div className="flex h-full flex-col overflow-hidden bg-white">
        <MainToolbar />
        <FormatBar />
        <div className="flex min-h-0 flex-1">
          <LeftColumn />
          <CanvasColumn />
          <Inspector />
        </div>
      </div>
    </div>
  );
}
